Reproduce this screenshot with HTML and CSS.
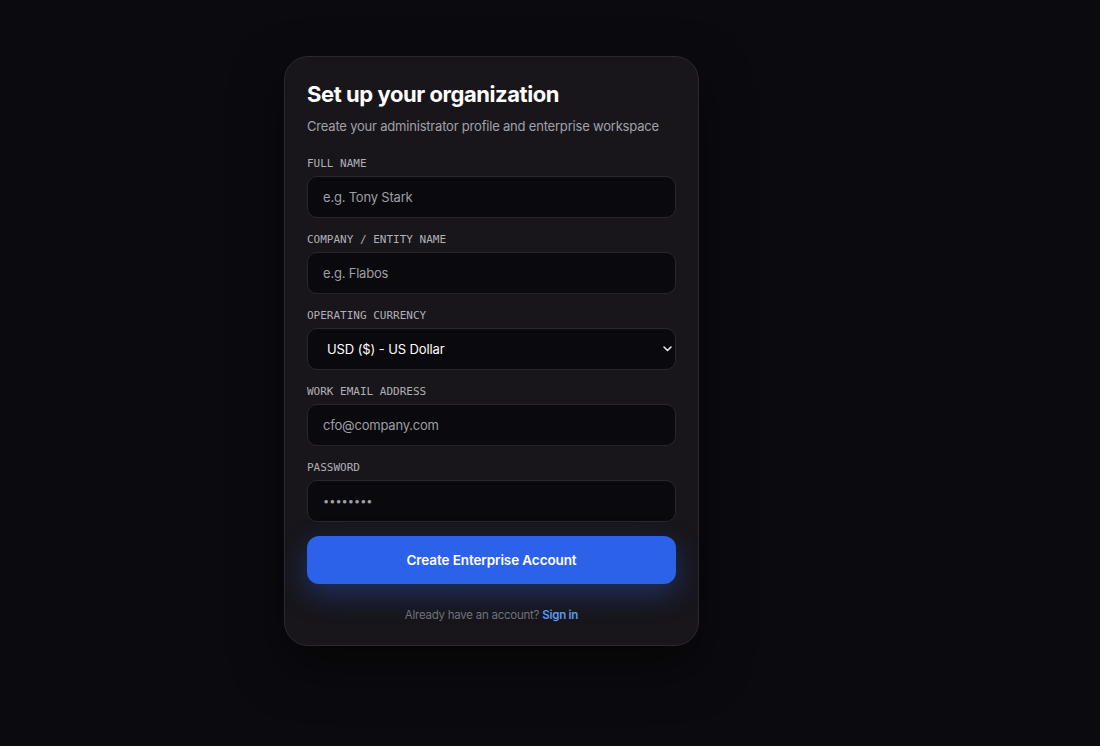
FILE: index.html
```html
<!DOCTYPE html>
<html lang="en">
<head>
<meta charset="utf-8">
<title>Set up your organization</title>
<link rel="stylesheet" href="styles.css">
</head>
<body>
<main class="page">
  <form class="card">
    <h1 class="title">Set up your organization</h1>
    <p class="subtitle">Create your administrator profile and enterprise workspace</p>

    <div class="fields">
      <div class="field">
        <label class="label">FULL NAME</label>
        <input class="input" type="text" placeholder="e.g. Tony Stark">
      </div>
      <div class="field">
        <label class="label">COMPANY / ENTITY NAME</label>
        <input class="input" type="text" placeholder="e.g. Flabos">
      </div>
      <div class="field">
        <label class="label">OPERATING CURRENCY</label>
        <div class="select">
          <span class="select-value">USD ($) - US Dollar</span>
          <svg class="chevron" width="9" height="6" viewBox="0 0 9 6"><path d="M1 1l3.5 3.5L8 1" fill="none" stroke="#e4e4e7" stroke-width="1.6" stroke-linecap="round" stroke-linejoin="round"/></svg>
        </div>
      </div>
      <div class="field">
        <label class="label">WORK EMAIL ADDRESS</label>
        <input class="input" type="email" placeholder="cfo@company.com">
      </div>
      <div class="field">
        <label class="label">PASSWORD</label>
        <input class="input input-pass" type="text" placeholder="••••••••">
      </div>
      <button class="btn" type="button">Create Enterprise Account</button>
    </div>

    <p class="footer">Already have an account? <a class="link" href="#">Sign in</a></p>
  </form>
</main>
</body>
</html>
```

FILE: styles.css
```css
* { box-sizing: border-box; }
html, body { margin: 0; padding: 0; }
body {
  background: #0b0a0f;
  font-family: Inter, "Noto Sans", "Liberation Sans", sans-serif;
  color: #fafafa;
  height: 746px;
  overflow: hidden;
}
.page {
  display: flex;
  justify-content: center;
  align-items: flex-start;
  padding: 56px 117px 0 0;
}
.card {
  width: 415px;
  background: #18161b;
  border: 1px solid #2b292f;
  border-radius: 24px;
  padding: 24px 22px 22px;
  box-shadow: 0 20px 50px rgba(0,0,0,0.5);
}
.title {
  margin: 0;
  font-size: 22px;
  line-height: 26px;
  font-weight: 700;
  letter-spacing: -0.02em;
  color: #ffffff;
}
.subtitle {
  margin: 9px 0 20px;
  font-size: 13px;
  line-height: 20px;
  letter-spacing: -0.2px;
  color: #a1a1aa;
  white-space: nowrap;
}
.fields {
  display: flex;
  flex-direction: column;
  gap: 14px;
}
.field {
  display: flex;
  flex-direction: column;
  gap: 4px;
}
.label {
  font-family: "DejaVu Sans Mono", "Liberation Mono", monospace;
  font-size: 11px;
  line-height: 16px;
  font-weight: 400;
  color: #b0b0b7;
}
.input, .select {
  height: 42px;
  width: 100%;
  background: #0a090d;
  border: 1px solid #29272d;
  border-radius: 10px;
  padding: 0 15px;
  font-family: Inter, "Noto Sans", "Liberation Sans", sans-serif;
  font-size: 13px;
  letter-spacing: -0.2px;
  color: #fafafa;
  outline: none;
}
.input::placeholder { color: #9e9ea6; }
.input-pass { font-size: 11px; letter-spacing: 0; }
.input-pass::placeholder { color: #a1a1aa; }
.select {
  display: flex;
  align-items: center;
  justify-content: space-between;
  padding: 0 3px 0 19px;
}
.select-value {
  font-size: 13px;
  letter-spacing: -0.1px;
  color: #ffffff;
}
.btn {
  height: 48px;
  width: 100%;
  border: none;
  border-radius: 12px;
  background: #2c62e8;
  color: #ffffff;
  font-family: Inter, "Noto Sans", "Liberation Sans", sans-serif;
  font-size: 13.5px;
  letter-spacing: -0.1px;
  font-weight: 600;
  box-shadow: 0 10px 28px rgba(44, 98, 232, 0.35);
  cursor: pointer;
}
.footer {
  margin: 23px 0 0;
  text-align: center;
  font-size: 11.5px;
  letter-spacing: -0.25px;
  line-height: 16px;
  color: #71717a;
}
.link {
  color: #5a9bf0;
  font-weight: 600;
  text-decoration: none;
}
```
